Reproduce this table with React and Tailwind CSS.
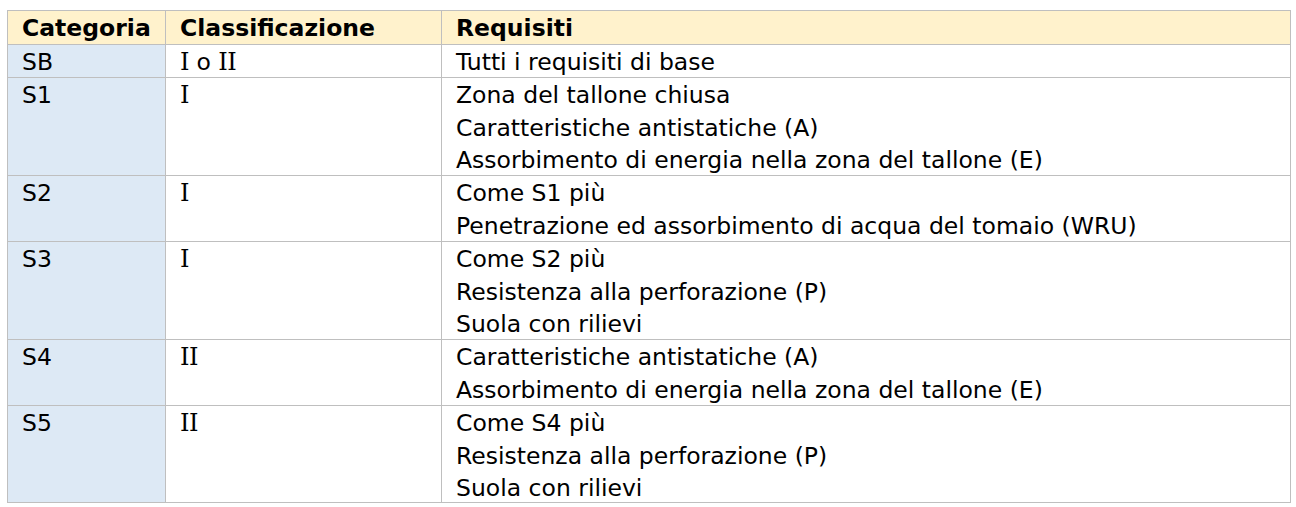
import React from "react";

const rows = [
  { cat: "SB", cls: "I o II", req: ["Tutti i requisiti di base"] },
  {
    cat: "S1",
    cls: "I",
    req: [
      "Zona del tallone chiusa",
      "Caratteristiche antistatiche (A)",
      "Assorbimento di energia nella zona del tallone (E)",
    ],
  },
  {
    cat: "S2",
    cls: "I",
    req: [
      "Come S1 più",
      "Penetrazione ed assorbimento di acqua del tomaio (WRU)",
    ],
  },
  {
    cat: "S3",
    cls: "I",
    req: ["Come S2 più", "Resistenza alla perforazione (P)", "Suola con rilievi"],
  },
  {
    cat: "S4",
    cls: "II",
    req: [
      "Caratteristiche antistatiche (A)",
      "Assorbimento di energia nella zona del tallone (E)",
    ],
  },
  {
    cat: "S5",
    cls: "II",
    req: ["Come S4 più", "Resistenza alla perforazione (P)", "Suola con rilievi"],
  },
];

function Roman({ text }) {
  // Render capital I with slab serifs like the original font
  const parts = text.split(/(I+)/);
  return (
    <>
      {parts.map((p, i) =>
        /^I+$/.test(p) ? (
          <span key={i} className="font-['DejaVu_Serif',serif] text-[24px] tracking-[-0.5px]">
            {p}
          </span>
        ) : (
          <span key={i}>{p}</span>
        )
      )}
    </>
  );
}

export default function App() {
  return (
    <div className="w-[1296px] h-[507px] bg-white pt-[10px] pl-[7px] font-['DejaVu_Sans',sans-serif] text-[23.5px] text-black">
      <div className="grid w-fit grid-cols-[157px_275px_848px] grid-rows-[33px_32px_97px_65px_97px_65px_96px] gap-px border border-[#bfbfbf] bg-[#bfbfbf] leading-[32.5px]">
        <div className="bg-[#fff2cc] pl-[14px] pt-[1px] font-bold">Categoria</div>
        <div className="bg-[#fff2cc] pl-[14px] pt-[1px] font-bold">Classificazione</div>
        <div className="bg-[#fff2cc] pl-[14px] pt-[1px] font-bold">Requisiti</div>
        {rows.map((r) => (
          <React.Fragment key={r.cat}>
            <div className="bg-[#dde9f5] pl-[14px] pt-[1px]">{r.cat}</div>
            <div className="bg-white pl-[14px] pt-[1px]">
              <Roman text={r.cls} />
            </div>
            <div className="flex flex-col bg-white pl-[14px] pt-[1px]">
              {r.req.map((line) => (
                <span key={line} className="whitespace-nowrap">
                  {line}
                </span>
              ))}
            </div>
          </React.Fragment>
        ))}
      </div>
    </div>
  );
}
